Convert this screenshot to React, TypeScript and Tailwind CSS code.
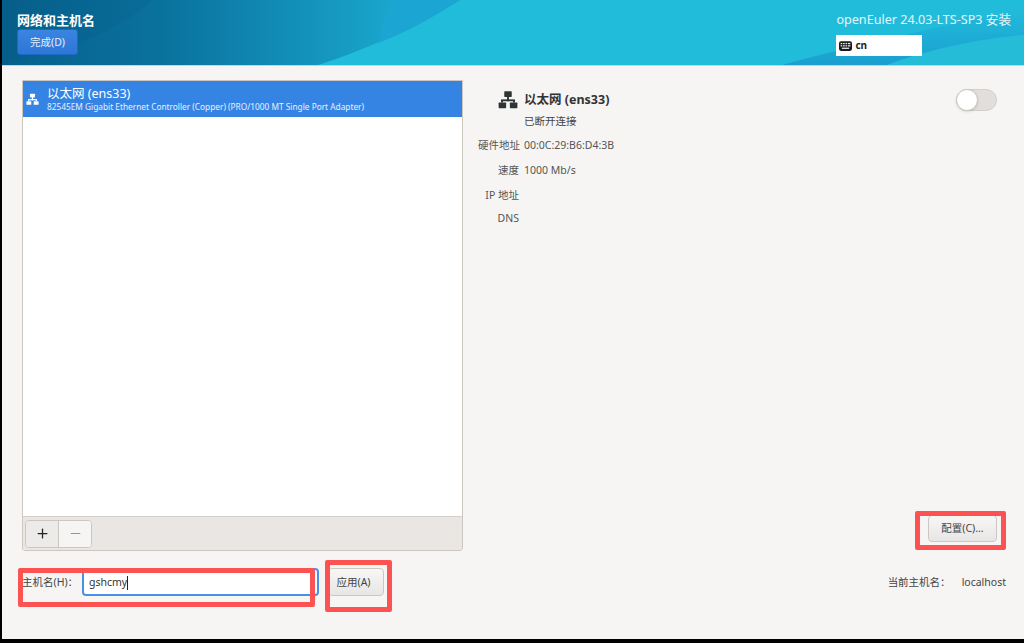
import { Minus, Plus } from "lucide-react";

const font = "[font-family:'Noto_Sans','Noto_Sans_CJK_SC',sans-serif]";

const NetworkIcon = ({ className }: { className: string }) => (
  <svg viewBox="0 0 16 16" className={className} fill="currentColor">
    <rect x="5" y="1" width="6" height="4.5" rx="0.5" />
    <rect x="7.25" y="5" width="1.5" height="4" />
    <rect x="2.5" y="7.5" width="11" height="1.5" />
    <rect x="2.5" y="8" width="1.5" height="2" />
    <rect x="12" y="8" width="1.5" height="2" />
    <rect x="0.5" y="10" width="6" height="4.5" rx="0.5" />
    <rect x="9.5" y="10" width="6" height="4.5" rx="0.5" />
  </svg>
);

const KeyboardIcon = () => (
  <svg viewBox="0 0 16 12" className="h-[10px] w-[13px]">
    <rect width="16" height="12" rx="2.5" fill="#1a1a1a" />
    <g fill="#e8e8e8">
      <rect x="2" y="2.2" width="2" height="1.6" />
      <rect x="5" y="2.2" width="2" height="1.6" />
      <rect x="8" y="2.2" width="2" height="1.6" />
      <rect x="11" y="2.2" width="3" height="1.6" />
      <rect x="2" y="5" width="2" height="1.6" />
      <rect x="5" y="5" width="2" height="1.6" />
      <rect x="8" y="5" width="2" height="1.6" />
      <rect x="11" y="5" width="3" height="1.6" />
      <rect x="3.5" y="8" width="9" height="1.6" />
    </g>
  </svg>
);

const details = [
  { label: "硬件地址", value: "00:0C:29:B6:D4:3B", rowH: "h-[25px]" },
  { label: "速度", value: "1000 Mb/s", rowH: "h-[25px]" },
  { label: "IP 地址", value: "", rowH: "h-[25px]" },
  { label: "DNS", value: "", rowH: "h-[21px]" },
];

export default function App() {
  return (
    <div className={`relative flex h-[643px] w-[1024px] flex-col overflow-hidden bg-black pb-[4px] pl-[2px] ${font}`}>
      {/* header */}
      <header className="relative h-[65px] shrink-0 overflow-hidden bg-[linear-gradient(90deg,#07608c_0%,#0a729e_16%,#1089b3_26%,#1aa6cc_38%,#1cacd0_100%)]">
        <svg viewBox="0 0 1022 65" className="absolute inset-0 h-full w-full" preserveAspectRatio="none">
          <defs>
            <linearGradient id="band" x1="0" y1="0" x2="0" y2="1">
              <stop offset="0" stopColor="#1a9fcf" stopOpacity="0" />
              <stop offset="1" stopColor="#1a9fcf" stopOpacity="1" />
            </linearGradient>
          </defs>
          <path d="M316 65 C345 56 400 35 458 0 L1022 0 L1022 65 Z" fill="#22bcdb" />
          <path d="M390 0 C384 12 380 28 376 43 C405 32 430 18 458 0 Z" fill="#1ba5d2" />
          <path d="M780 65 C850 45 950 25 1022 8 L1022 35 C975 39 925 50 885 65 Z" fill="url(#band)" />
          <path d="M1022 35 C975 39 925 50 885 65 L1022 65 Z" fill="#25bcd8" />
          <path d="M0 0 L150 0 C125 25 70 50 0 65 Z" fill="#05577f" opacity="0.15" />
        </svg>
        <div className="relative flex h-full justify-between pl-[15px] pr-[13px]">
          <div className="flex flex-col items-start pt-[12px]">
            <h1 className="text-[13px] font-bold leading-[16px] text-white">网络和主机名</h1>
            <button className="mt-[1px] flex h-[26px] w-[61px] items-center justify-center rounded-[3px] border border-[#1b6acb] bg-[linear-gradient(#3a84e2,#2f76d6)] pt-[2px] text-[10.5px] text-[#e6f0fc]">
              完成(D)
            </button>
          </div>
          <div className="flex flex-col items-start pt-[12px]">
            <div className="text-[12.6px] leading-[16px] text-[#e4f6fb]">openEuler 24.03-LTS-SP3 安装</div>
            <div className="mt-[7px] flex h-[21px] w-[86px] items-center gap-[3px] bg-white pl-[3px]">
              <KeyboardIcon />
              <span className="text-[10px] font-bold text-[#222]">cn</span>
            </div>
          </div>
        </div>
      </header>

      {/* body */}
      <main className="flex min-h-0 flex-1 border-t border-[#c9d3d6] bg-[#f6f5f4] pl-[20px] pr-[17px]">
        <section className="flex w-[441px] shrink-0 flex-col pt-[14px]">
          <div className="flex h-[471px] flex-col overflow-hidden rounded-b-[3px] border border-[#cdc7c2] bg-white">
            <div className="flex h-[36px] shrink-0 items-center bg-[#3584e4] pl-[3px] text-white">
              <NetworkIcon className="h-[13px] w-[13px] shrink-0" />
              <div className="ml-[8px]">
                <div className="text-[12.5px] leading-[15px]">以太网 (ens33)</div>
                <div className="text-[8.3px] leading-[11px] text-[#e6f0fc]">
                  82545EM Gigabit Ethernet Controller (Copper) (PRO/1000 MT Single Port Adapter)
                </div>
              </div>
            </div>
            <div className="flex-1" />
            <div className="flex h-[34px] shrink-0 items-center border-t border-[#d5d0cc] bg-[#e9e6e3] pl-[2px]">
              <div className="flex h-[28px] w-[67px] overflow-hidden rounded-[4px] border border-[#cdc7c2]">
                <button className="flex w-[33px] items-center justify-center border-r border-[#cdc7c2] bg-[#edebe9] text-[#222]">
                  <Plus size={15} strokeWidth={2} />
                </button>
                <button className="flex flex-1 items-center justify-center bg-[#f6f5f4] text-[#8f8d8b]">
                  <Minus size={15} strokeWidth={1.5} />
                </button>
              </div>
            </div>
          </div>
          <div className="mt-[17px] flex h-[28px] items-center">
            <label className="w-[60px] shrink-0 pt-[1px] text-[10.5px] text-[#444]">主机名(H)：</label>
            <div className="flex h-[28px] w-[237px] items-center rounded-[4px] border-2 border-[#4a90e8] bg-white pl-[5px] pt-[1px] text-[10.5px] text-[#333]">
              gshcmy<span className="h-[14px] w-px bg-[#222]" />
            </div>
            <button className="ml-[9px] h-[28px] w-[56px] rounded-[4px] border border-[#cdc7c2] bg-[linear-gradient(#f8f7f6,#e8e6e4)] pr-[5px] pt-[1px] text-[10.5px] text-[#444]">
              应用(A)
            </button>
          </div>
        </section>

        <section className="flex flex-1 flex-col pl-[15px]">
          <div className="flex items-start justify-between pr-[10px] pt-[24px]">
            <div>
              <div className="flex h-[20px] items-center pl-[20px]">
                <NetworkIcon className="h-[20px] w-[20px] text-[#2e3436]" />
                <span className="ml-[6px] text-[12.5px] font-bold text-[#333]">以太网 (ens33)</span>
              </div>
              <div className="mt-[1px] pl-[46px] text-[10.5px] leading-[20px] text-[#444]">已断开连接</div>
              <div className="mt-[2px]">
                {details.map((row) => (
                  <div key={row.label} className={`flex items-center text-[10.5px] text-[#555] ${row.rowH}`}>
                    <span className="w-[41px] whitespace-nowrap text-right">{row.label}</span>
                    <span className="ml-[5px]">{row.value}</span>
                  </div>
                ))}
              </div>
            </div>
            <div className="relative mt-[-1px] h-[22px] w-[41px] rounded-full border border-[#d3cfcb] bg-[#e1dedb]">
              <div className="absolute left-[-1px] top-[-1px] h-[22px] w-[22px] rounded-full border border-[#cdc7c2] bg-white shadow-sm" />
            </div>
          </div>
          <div className="mt-auto flex flex-col items-end">
            <button className="mr-[10px] h-[27px] w-[69px] rounded-[4px] border border-[#cdc7c2] bg-[linear-gradient(#f8f7f6,#e8e6e4)] text-[10.5px] text-[#444]">
              配置(C)...
            </button>
            <div className="mb-[50px] mr-[1px] mt-[33px] flex text-[10.5px] leading-[14px] text-[#444]">
              <span>当前主机名：</span>
              <span className="ml-[11px]">localhost</span>
            </div>
          </div>
        </section>
      </main>

      {/* red annotation boxes */}
      <div className="absolute left-[18px] top-[568px] h-[39px] w-[297px] rounded-[2px] border-[5px] border-[#fd5252]" />
      <div className="absolute left-[325px] top-[560px] h-[52px] w-[67px] rounded-[2px] border-[5px] border-[#fd5252]" />
      <div className="absolute left-[915px] top-[511px] h-[39px] w-[91px] rounded-[2px] border-[5px] border-[#fd5252]" />
    </div>
  );
}
